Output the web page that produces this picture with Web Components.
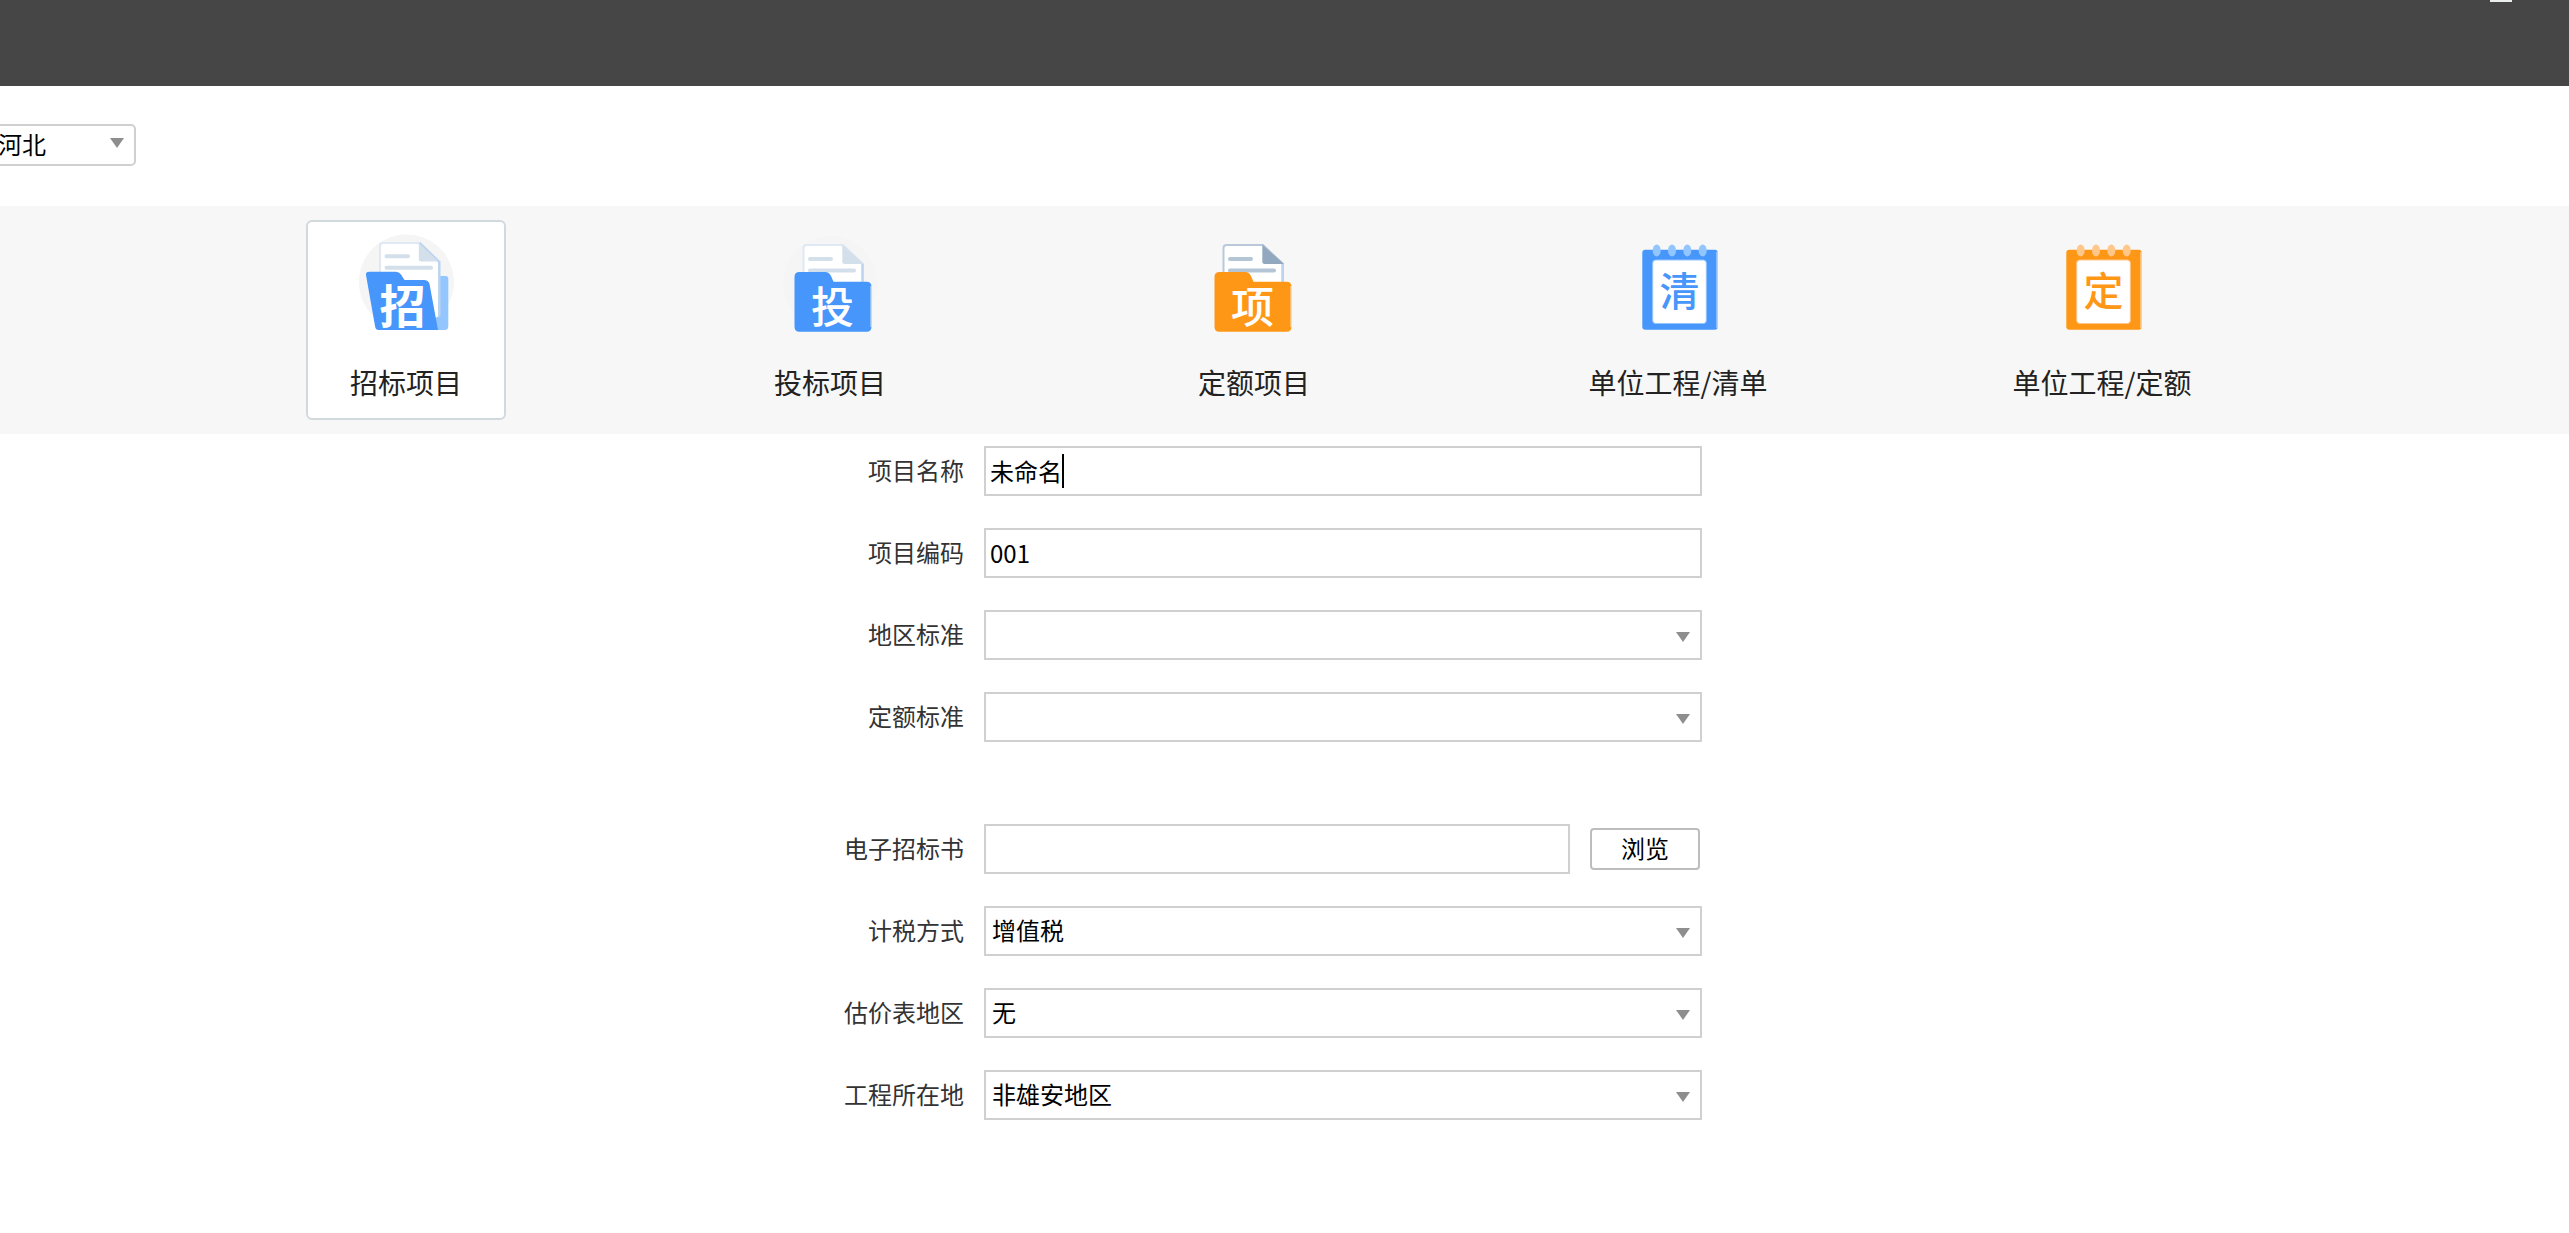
<!DOCTYPE html>
<html lang="zh-CN">
<head>
<meta charset="utf-8">
<title>新建项目</title>
<style>
  body { margin: 0; background: #fff; font-family: "Noto Sans CJK SC", "Liberation Sans", sans-serif; }
</style>
</head>
<body>
<new-project></new-project>

<script>
const define = (name, render, after) => customElements.define(name, class extends HTMLElement {
  connectedCallback() {
    if (this.shadowRoot) return;
    this.attachShadow({ mode: "open" }).innerHTML = render(this);
    if (after) after(this);
  }
});

const controls = `
  *, *::before { box-sizing: border-box; }
  input, select, button { font: inherit; color: #000; margin: 0; border-radius: 0; outline: none; }
  .pick { display: grid; align-items: center; min-width: 0; }
  .pick > * { grid-area: 1 / 1; }
  .pick select { appearance: none; width: 100%; background: #fff; border: 2px solid #d0d0d0; font-size: 24px; cursor: pointer; }
  .pick svg { justify-self: end; width: 14px; height: 10px; margin-right: 12px; fill: #8e8e8e; pointer-events: none; }
`;
const arrow = `<svg viewBox="0 0 14 10" aria-hidden="true"><path d="M0 0H14L7 10Z"/></svg>`;

/* Window title bar with the minimise control */
define("title-bar", () => `
  <style>
    :host { display: flex; justify-content: flex-end; align-items: flex-start; height: 86px; padding-right: 57px; background: #464646; }
    button { display: block; width: 22px; height: 2px; padding: 0; border: 0; background: #eceeee; }
  </style>
  <button type="button" aria-label="最小化"></button>`);

/* Region drop-down */
define("region-picker", () => `
  <style>
    ${controls}
    :host { display: flex; padding: 38px 0 40px; }
    .pick { width: 146px; margin-left: -10px; }
    .pick select { height: 42px; padding: 0 32px 4px 6px; border-radius: 5px; }
    .pick svg { margin-bottom: 4px; }
  </style>
  <div class="pick"><select aria-label="地区"><option>河北</option></select>${arrow}</div>`);

/* Pictures on the project type cards */
const folder = (ch, main, line, fold, edge, side, dx, halo) => `
  ${halo ? `<path d="M19 86A47 47 0 1 1 77 86Z" fill="#f5f5f6"/>` : ""}
  <g transform="translate(${dx} 0)">
    <path d="M21.500 44V14Q21.500 11 24.500 11H61L81 30V52H21.500Z" fill="#fff" stroke="${edge}" stroke-width="2"/>
    <path d="M80.500 30V50" stroke="${side}" stroke-width="2.500"/>
    <path d="M60.300 10.500L82 30H63Q60.300 30 60.300 27.500Z" fill="${fold}"/>
    <path d="M28 25H49M28 36.500H72" stroke="${line}" stroke-width="4" stroke-linecap="round"/>
    <path d="M12.500 43Q12.500 38 17.500 38H43Q47 38 49 42L51.500 47.700H84.500Q89.500 47.700 89.500 52.700V92.700Q89.500 97.700 84.500 97.700H17.500Q12.500 97.700 12.500 92.700Z" fill="${main}"/>
    <path d="M89 52V93" stroke="#fff" stroke-opacity=".5" stroke-width="1.500"/>
    <text x="50.500" y="89" font-size="43" font-weight="500" fill="#fff" text-anchor="middle">${ch}</text>
  </g>`;
const notepad = (ch, main, ring) => `
  <rect x="12.300" y="15.700" width="75.400" height="80" rx="3" fill="${main}"/>
  <path d="M87 18V94" stroke="#fff" stroke-opacity=".5" stroke-width="1.500"/>
  <rect x="22.700" y="26" width="53.600" height="63.500" rx="3" fill="#fff" stroke="${ring}" stroke-width="1"/>
  <g fill="${ring}">${[26.7, 42, 57.3, 72.7].map(x => `<ellipse cx="${x}" cy="16.500" rx="4" ry="6"/>`).join("")}</g>
  <text x="49.500" y="72" font-size="40" font-weight="500" fill="${main}" text-anchor="middle">${ch}</text>`;
const pictures = {
  tender: `
    <path d="M21.400 87A47.500 47.500 0 1 1 90 71V96H21Z" fill="#f5f5f6"/>
    <path d="M64 42H87.500Q90.300 42 90.300 45V92Q90.300 96 86.300 96H60Z" fill="#93c5ff"/>
    <path d="M22 60V12Q22 9 25 9H61.500L81.500 28V82L77 84Z" fill="#fff"/>
    <path d="M22 40V12Q22 9 25 9H61.500" fill="none" stroke="#dfe8f3" stroke-width="2"/>
    <path d="M61.500 9L81.300 28V82" fill="none" stroke="#bcd4ef" stroke-width="2.500"/>
    <path d="M60.800 9L80.500 27.500H63.500Q60.800 27.500 60.800 25Z" fill="#d3dfea"/>
    <path d="M28.500 22.300H50M28.500 33.700H73" stroke="#d3dfea" stroke-width="4" stroke-linecap="round"/>
    <path d="M8 41Q7.500 37.700 11.500 37.700H38Q41 37.700 43 40.500L46.500 46H66Q70.300 46 71.500 50L80 96H20.500Q17.500 96 17 92Z" fill="#4796fb"/>
    <text x="44.500" y="89" font-size="46" font-weight="700" fill="#fff" text-anchor="middle">招</text>`,
  bid: folder("投", "#4796fb", "#d3dfea", "#d3dfea", "#dfe8f3", "#bcd4ef", 0, true),
  quota: folder("项", "#ff9716", "#b4c5d6", "#92a8bf", "#b9c9da", "#bcd4ef", -4, false),
  list: notepad("清", "#4796fb", "#93c5ff"),
  unit: notepad("定", "#ff9716", "#ffc78a")
};

/* One project type; its caption is slotted */
define("type-card", el => `
  <style>
    :host { display: flex; flex: 1; justify-content: center; min-width: 0; }
    button { box-sizing: border-box; display: flex; flex-direction: column; align-items: center; gap: 30px; width: 200px; height: 200px; padding: 12px 0 0; border: 2px solid transparent; border-radius: 6px; background: none; color: #222; font: inherit; font-size: 28px; line-height: 36px; white-space: nowrap; cursor: pointer; }
    :host([selected]) button { background: #fff; border-color: #d2d9dd; }
    svg { display: block; flex: none; width: 96px; height: 100px; overflow: visible; }
  </style>
  <button type="button" aria-pressed="${el.hasAttribute("selected")}">
    <svg viewBox="0 0 96 100" aria-hidden="true">${pictures[el.getAttribute("picture")]}</svg>
    <span><slot></slot></span>
  </button>`);

define("type-strip", () => `
  <style>:host { display: flex; padding: 14px 255px 14px 194px; background: #f7f7f7; }</style>
  <slot></slot>`);

/* Labelled row: kind is text, select or file */
define("form-row", el => {
  const kind = el.getAttribute("kind"), value = el.getAttribute("value") || "";
  const box = kind === "select"
    ? `<div class="pick"><select id="c"><option>${value}</option></select>${arrow}</div>`
    : `<div class="box"><input id="c" type="text" autocomplete="off" value="${value}">${el.hasAttribute("editing") ? "<i></i>" : ""}</div>`;
  return `
  <style>
    ${controls}
    :host { display: flex; align-items: center; gap: 20px; font-size: 24px; line-height: 36px; }
    label { flex: none; width: 158px; padding-bottom: 2px; text-align: right; color: #333; white-space: nowrap; }
    .pick, .box { flex: 1; height: 50px; min-width: 0; }
    .pick select { height: 50px; padding: 0 32px 2px 6px; }
    .pick svg { margin-top: 4px; }
    .box { display: flex; align-items: center; border: 2px solid #d0d0d0; background: #fff; padding: 0 4px; }
    .box input { flex: 1; min-width: 0; height: 38px; padding: 0 0 2px; border: 0; background: none; }
    :host([editing]) .box input { flex: none; field-sizing: content; }
    i { width: 2px; height: 34px; background: #000; }
    button { flex: none; width: 110px; height: 42px; margin-right: 2px; padding: 0 0 2px; border: 2px solid #bdbdbd; border-radius: 4px; background: #fff; line-height: 36px; cursor: pointer; }
  </style>
  <label for="c">${el.getAttribute("label")}</label>${box}${kind === "file" ? `<button type="button">浏览</button>` : ""}`;
});

define("row-group", () => `
  <style>:host { display: flex; flex-direction: column; gap: 32px; }</style>
  <slot></slot>`);

define("project-form", () => `
  <style>
    :host { display: block; padding: 12px 255px 48px 194px; }
    form { display: flex; flex-direction: column; gap: 82px; max-width: 896px; margin: 0 auto; }
  </style>
  <form><slot></slot></form>`);

define("new-project", () => `
  <style>:host { display: block; overflow: hidden; }</style>
  <title-bar></title-bar>
  <region-picker></region-picker>
  <type-strip>
    <type-card picture="tender" selected>招标项目</type-card>
    <type-card picture="bid">投标项目</type-card>
    <type-card picture="quota">定额项目</type-card>
    <type-card picture="list">单位工程/清单</type-card>
    <type-card picture="unit">单位工程/定额</type-card>
  </type-strip>
  <project-form>
    <row-group>
      <form-row kind="text" label="项目名称" value="未命名" editing></form-row>
      <form-row kind="text" label="项目编码" value="001"></form-row>
      <form-row kind="select" label="地区标准"></form-row>
      <form-row kind="select" label="定额标准"></form-row>
    </row-group>
    <row-group>
      <form-row kind="file" label="电子招标书"></form-row>
      <form-row kind="select" label="计税方式" value="增值税"></form-row>
      <form-row kind="select" label="估价表地区" value="无"></form-row>
      <form-row kind="select" label="工程所在地" value="非雄安地区"></form-row>
    </row-group>
  </project-form>`);
</script>
</body>
</html>
